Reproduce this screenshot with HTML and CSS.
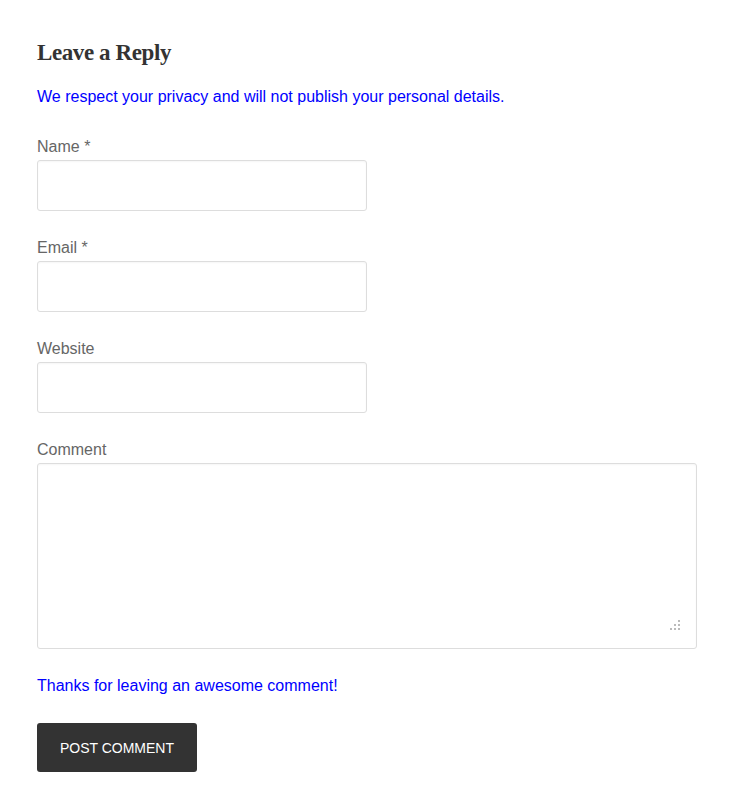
FILE: index.html
```html
<!DOCTYPE html>
<html lang="en">
<head>
    <meta charset="UTF-8">
    <meta name="viewport" content="width=device-width, initial-scale=1.0">
    <title>Leave a Reply</title>
    <link rel="stylesheet" href="styles.css">
</head>
<body>
    <div class="respond">
        <h3 class="reply-title">Leave a Reply</h3>
        <p class="notes">We respect your privacy and will not publish your personal details.</p>
        <form class="comment-form">
            <div class="field">
                <label for="author">Name *</label>
                <input id="author" type="text" class="short">
            </div>
            <div class="field">
                <label for="email">Email *</label>
                <input id="email" type="text" class="short">
            </div>
            <div class="field">
                <label for="url">Website</label>
                <input id="url" type="text" class="short">
            </div>
            <div class="field">
                <label for="comment">Comment</label>
                <div class="textarea-wrap">
                    <textarea id="comment"></textarea>
                    <span class="grip"></span>
                </div>
            </div>
            <p class="notes after">Thanks for leaving an awesome comment!</p>
            <button type="button" class="submit">POST COMMENT</button>
        </form>
    </div>
</body>
</html>
```

FILE: styles.css
```css
body {
    margin: 0;
    padding: 0;
    background-color: #fff;
    font-family: "Liberation Sans", Arial, sans-serif;
    font-size: 16px;
    color: #555;
}
.respond {
    padding: 38px 39px 30px 37px;
}
.reply-title {
    margin: 0 0 17px 0;
    font-family: "Liberation Serif", "Times New Roman", serif;
    font-weight: bold;
    font-size: 23px;
    line-height: 30px;
    color: #333;
    letter-spacing: -0.4px;
}
.notes {
    margin: 0 0 26px 0;
    line-height: 24px;
    color: #0000ff;
}
.notes.after {
    margin-bottom: 25px;
}
.field {
    margin-bottom: 25px;
}
.field label {
    display: block;
    line-height: 24px;
    margin-bottom: 1px;
    color: #666;
}
.field input,
.field textarea {
    display: block;
    box-sizing: border-box;
    border: 1px solid #ddd;
    border-radius: 3px;
    background: #fff;
    box-shadow: inset 0 1px 2px rgba(0, 0, 0, 0.04);
    font-family: inherit;
    font-size: 16px;
    margin: 0;
    padding: 10px;
}
.field input.short {
    width: 330px;
    height: 51px;
}
.textarea-wrap {
    position: relative;
}
.field textarea {
    width: 100%;
    height: 186px;
    resize: none;
}
/* dotted resize grip in the corner */
.grip {
    position: absolute;
    right: 16px;
    bottom: 18px;
    width: 12px;
    height: 12px;
    background:
        radial-gradient(circle, #bbb 1px, transparent 1.2px) 8px 0 / 4px 4px no-repeat,
        radial-gradient(circle, #bbb 1px, transparent 1.2px) 4px 4px / 4px 4px no-repeat,
        radial-gradient(circle, #bbb 1px, transparent 1.2px) 8px 4px / 4px 4px no-repeat,
        radial-gradient(circle, #bbb 1px, transparent 1.2px) 0 8px / 4px 4px no-repeat,
        radial-gradient(circle, #bbb 1px, transparent 1.2px) 4px 8px / 4px 4px no-repeat,
        radial-gradient(circle, #bbb 1px, transparent 1.2px) 8px 8px / 4px 4px no-repeat;
    pointer-events: none;
}
.submit {
    display: block;
    width: 160px;
    height: 49px;
    border: none;
    border-radius: 3px;
    background-color: #333;
    color: #fff;
    font-family: inherit;
    font-size: 14px;
    cursor: pointer;
}
.submit:hover {
    background-color: #555;
}
```
